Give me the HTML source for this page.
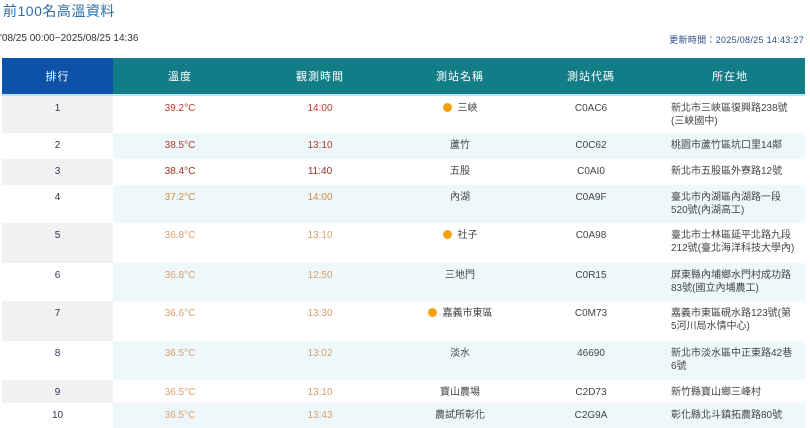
<!DOCTYPE html>
<html><head><meta charset="utf-8"><style>
body{margin:0;width:810px;height:427px;background:#fff;font-family:"Liberation Sans","Noto Sans CJK TC",sans-serif;overflow:hidden;position:relative}
.t{position:absolute;left:3px;top:1px;font-size:14px;color:#2b6ea8;letter-spacing:.5px}
.d{position:absolute;left:0;top:33px;font-size:10px;color:#333}
.u{position:absolute;right:6px;top:33px;font-size:9px;color:#2a4f80;letter-spacing:.3px}
table{position:absolute;left:2px;top:58px;width:803px;border-collapse:collapse;font-size:10px;table-layout:fixed}
th{height:34px;background:#137d87;color:#fff;font-weight:normal;font-size:11px;letter-spacing:1px;border-bottom:2px solid #bfe3ea}
th.r{background:#0d52a8}
td{text-align:center;vertical-align:top;padding:6px 0 0;color:#444;line-height:13px}
td.r{background:#f1f1f1;color:#335}
tr.e td{background:#eef8fb}
tr.e td.r{background:#fff}
td.l{text-align:left;padding-left:16px}
.dot{display:inline-block;width:9px;height:9px;border-radius:50%;background:#f2a20f;vertical-align:-1px;margin-right:6px}
.c1{color:#c0392b}.c2{color:#b33a2a}.c3{color:#9a2a1a}.c4{color:#d18a40}.c5{color:#d6a070}
</style></head><body>
<div class="t">前100名高溫資料</div>
<div class="d">'08/25 00:00~2025/08/25 14:36</div>
<div class="u">更新時間：2025/08/25 14:43:27</div>
<table>
<colgroup><col style="width:111px"><col style="width:134px"><col style="width:146px"><col style="width:134px"><col style="width:128px"><col></colgroup>
<tr><th class="r">排行</th><th>溫度</th><th>觀測時間</th><th>測站名稱</th><th>測站代碼</th><th>所在地</th></tr>
<tr style="height:38px"><td class="r">1</td><td class="c1">39.2°C</td><td class="c1">14:00</td><td><span class="dot"></span>三峽</td><td>C0AC6</td><td class="l">新北市三峽區復興路238號<br>(三峽國中)</td></tr>
<tr class="e" style="height:26px"><td class="r">2</td><td class="c2">38.5°C</td><td class="c2">13:10</td><td>蘆竹</td><td>C0C62</td><td class="l">桃園市蘆竹區坑口里14鄰</td></tr>
<tr style="height:26px"><td class="r">3</td><td class="c3">38.4°C</td><td class="c3">11:40</td><td>五股</td><td>C0AI0</td><td class="l">新北市五股區外寮路12號</td></tr>
<tr class="e" style="height:38px"><td class="r">4</td><td class="c4">37.2°C</td><td class="c4">14:00</td><td>內湖</td><td>C0A9F</td><td class="l">臺北市內湖區內湖路一段<br>520號(內湖高工)</td></tr>
<tr style="height:40px"><td class="r">5</td><td class="c5">36.8°C</td><td class="c5">13:10</td><td><span class="dot"></span>社子</td><td>C0A98</td><td class="l">臺北市士林區延平北路九段<br>212號(臺北海洋科技大學內)</td></tr>
<tr class="e" style="height:38px"><td class="r">6</td><td class="c5">36.8°C</td><td class="c5">12:50</td><td>三地門</td><td>C0R15</td><td class="l">屏東縣內埔鄉水門村成功路<br>83號(國立內埔農工)</td></tr>
<tr style="height:40px"><td class="r">7</td><td class="c5">36.6°C</td><td class="c5">13:30</td><td><span class="dot"></span>嘉義市東區</td><td>C0M73</td><td class="l">嘉義市東區硯水路123號(第<br>5河川局水情中心)</td></tr>
<tr class="e" style="height:39px"><td class="r">8</td><td class="c5">36.5°C</td><td class="c5">13:02</td><td>淡水</td><td>46690</td><td class="l">新北市淡水區中正東路42巷<br>6號</td></tr>
<tr style="height:23px"><td class="r">9</td><td class="c5">36.5°C</td><td class="c5">13:10</td><td>寶山農場</td><td>C2D73</td><td class="l">新竹縣寶山鄉三峰村</td></tr>
<tr class="e" style="height:25px"><td class="r">10</td><td class="c5">36.5°C</td><td class="c5">13:43</td><td>農試所彰化</td><td>C2G9A</td><td class="l">彰化縣北斗鎮拓農路80號</td></tr>
</table>
</body></html>
